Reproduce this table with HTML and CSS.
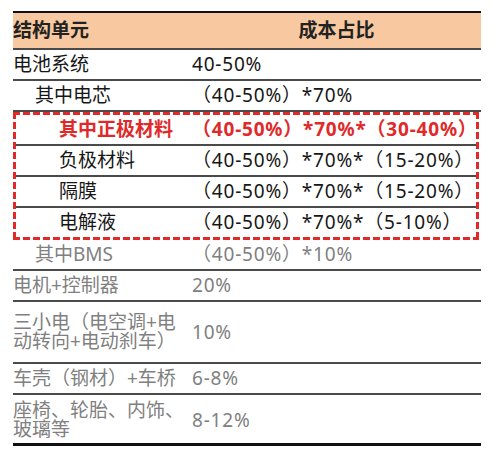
FILE: index.html
```html
<!DOCTYPE html>
<html lang="zh">

<head>
    <meta charset="utf-8">
    <title>成本占比</title>
    <link rel="stylesheet" href="styles.css">
</head>

<body>
    <div class="tabel">
        <div class="raekke hoved">
            <div>结构单元</div>
            <div class="midt">成本占比</div>
        </div>
        <div class="raekke">
            <div>电池系统</div>
            <div class="tal">40-50%</div>
        </div>
        <div class="raekke">
            <div class="ind1">其中电芯</div>
            <div class="tal">（40-50%）*70%</div>
        </div>

        <div class="boks">
            <div class="raekke rod">
                <div class="ind2">其中正极材料</div>
                <div class="tal">（40-50%）*70%*（30-40%）</div>
            </div>
            <div class="raekke">
                <div class="ind2">负极材料</div>
                <div class="tal">（40-50%）*70%*（15-20%）</div>
            </div>
            <div class="raekke">
                <div class="ind2">隔膜</div>
                <div class="tal">（40-50%）*70%*（15-20%）</div>
            </div>
            <div class="raekke sidste">
                <div class="ind2">电解液</div>
                <div class="tal">（40-50%）*70%*（5-10%）</div>
            </div>
        </div>

        <div class="raekke graa">
            <div class="ind1">其中BMS</div>
            <div class="tal">（40-50%）*10%</div>
        </div>
        <div class="raekke graa">
            <div>电机+控制器</div>
            <div class="tal">20%</div>
        </div>
        <div class="raekke graa to">
            <div>三小电（电空调+电动转向+电动刹车）</div>
            <div class="tal">10%</div>
        </div>
        <div class="raekke graa">
            <div>车壳（钢材）+车桥</div>
            <div class="tal">6-8%</div>
        </div>
        <div class="raekke graa to bund">
            <div>座椅、轮胎、内饰、玻璃等</div>
            <div class="tal">8-12%</div>
        </div>
    </div>
</body>

</html>
```

FILE: styles.css
```css
body {
    margin: 0;
    padding: 11px 0 0 13px;
    background-color: white;
    font-family: "Noto Sans", "Noto Sans CJK SC", sans-serif;
    font-size: 19px;
    color: #161616;
}

.tabel {
    width: 468px;
    border-top: 2px solid #111;
}

.raekke {
    display: grid;
    grid-template-columns: 179px 1fr;
    align-items: center;
    line-height: 25px;
    padding: 2px 0;
    border-bottom: 2px solid #4a4a4a;
}

.hoved {
    background-color: #f8c9a0;
    font-weight: bold;
    padding: 5px 0;
    color: #222;
}

.midt {
    text-align: center;
}

.tal {
    letter-spacing: 0.8px;
}

.ind1 {
    padding-left: 22px;
}

.ind2 {
    padding-left: 43px;
}

.boks {
    margin-right: 2px;
    padding: 3px;
    background:
        repeating-linear-gradient(90deg, #e02a2a 0 7px, transparent 7px 10px) top left / 100% 3px no-repeat,
        repeating-linear-gradient(90deg, #e02a2a 0 7px, transparent 7px 10px) bottom left / 100% 3px no-repeat,
        repeating-linear-gradient(180deg, #e02a2a 0 7px, transparent 7px 10px) top left / 3px 100% no-repeat,
        repeating-linear-gradient(180deg, #e02a2a 0 7px, transparent 7px 10px) top right / 3px 100% no-repeat;
}

.boks .raekke {
    grid-template-columns: 176px 1fr;
}

.rod {
    color: #e02a2a;
    font-weight: bold;
}

.sidste {
    border-bottom: none;
}

.graa {
    color: #808080;
}

.to {
    line-height: 19px;
    padding: 11px 0;
}

.bund {
    padding: 6px 0 4px;
    border-bottom: 3px solid #111;
}
```
